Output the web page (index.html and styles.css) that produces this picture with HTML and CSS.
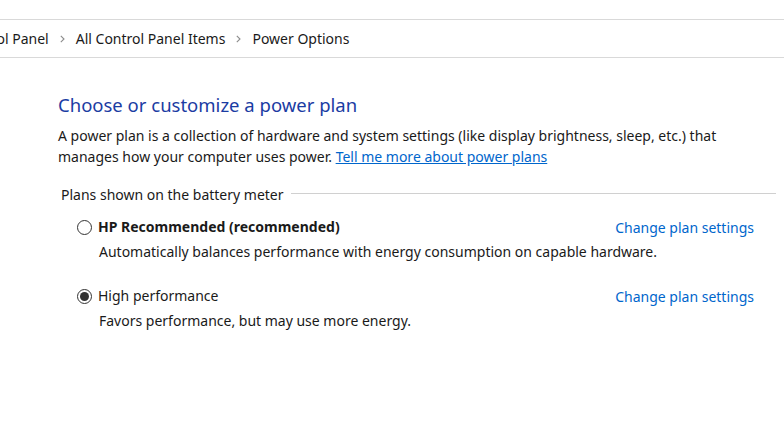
FILE: index.html
```html
<!DOCTYPE html>
<html lang="en">
<head>
    <meta charset="UTF-8">
    <meta name="viewport" content="width=device-width, initial-scale=1.0">
    <title>Power Options</title>
    <link rel="stylesheet" href="styles.css">
</head>
<body>
    <div class="top-strip"></div>

    <!-- Address bar / breadcrumb -->
    <div class="address-bar">
        <span class="crumb crumb-first">Control Panel</span>
        <svg class="chevron" width="5" height="8" viewBox="0 0 5 8"><path d="M0.8 0.8 L4 4 L0.8 7.2" fill="none" stroke="#8c8c8c" stroke-width="1.1"/></svg>
        <span class="crumb">All Control Panel Items</span>
        <svg class="chevron" width="5" height="8" viewBox="0 0 5 8"><path d="M0.8 0.8 L4 4 L0.8 7.2" fill="none" stroke="#8c8c8c" stroke-width="1.1"/></svg>
        <span class="crumb">Power Options</span>
    </div>

    <div class="main">
        <h1 class="title">Choose or customize a power plan</h1>
        <p class="intro">
            A power plan is a collection of hardware and system settings (like display brightness, sleep, etc.) that<br>
            manages how your computer uses power. <a href="#" class="link">Tell me more about power plans</a>
        </p>

        <!-- Plans group -->
        <div class="group-header">
            <span class="group-title">Plans shown on the battery meter</span>
            <span class="group-line"></span>
        </div>

        <div class="plans">
            <div class="plan">
                <span class="radio"></span>
                <span class="plan-name bold">HP Recommended (recommended)</span>
                <a href="#" class="plan-link">Change plan settings</a>
                <span class="plan-desc">Automatically balances performance with energy consumption on capable hardware.</span>
            </div>
            <div class="plan">
                <span class="radio checked"></span>
                <span class="plan-name">High performance</span>
                <a href="#" class="plan-link">Change plan settings</a>
                <span class="plan-desc">Favors performance, but may use more energy.</span>
            </div>
        </div>
    </div>
</body>
</html>
```

FILE: styles.css
```css
/* Global styles */
body {
    font-family: "Noto Sans", "Open Sans", sans-serif;
    font-size: 14px;
    color: #1a1a1a;
    background-color: #fff;
    margin: 0;
    overflow: hidden;
}

.top-strip {
    height: 19px;
}

/* Breadcrumb bar */
.address-bar {
    display: flex;
    align-items: center;
    height: 37px;
    border-top: 1px solid #d9d9d9;
    border-bottom: 1px solid #d9d9d9;
    white-space: nowrap;
}

.crumb {
    color: #1a1a1a;
}

.crumb-first {
    margin-left: -40px;
}

.chevron {
    margin: 0 11px 0 11px;
}

/* Main content */
.main {
    padding: 34px 8px 0 58px;
}

.title {
    font-size: 18.5px;
    font-weight: normal;
    line-height: 26px;
    color: #1b3ca3;
    margin: 0;
}

.intro {
    line-height: 21px;
    margin: 7px 0 0 0;
}

.link {
    color: #0066cc;
}

/* Group header with rule */
.group-header {
    display: flex;
    align-items: center;
    margin-top: 18px;
    line-height: 20px;
    padding-left: 3px;
}

.group-line {
    flex: 1;
    height: 1px;
    background-color: #d0d0d0;
    margin: 0 0 4px 7px;
}

/* Plans */
.plans {
    padding: 0 22px 0 19px;
}

.plan {
    display: grid;
    grid-template-columns: 21px 1fr auto;
    align-items: center;
    margin-top: 23px;
}

.plan:first-child {
    margin-top: 11px;
}

.radio {
    width: 13px;
    height: 13px;
    border: 1px solid #333;
    border-radius: 50%;
    position: relative;
}

.radio.checked::after {
    content: "";
    position: absolute;
    left: 2px;
    top: 2px;
    width: 9px;
    height: 9px;
    border-radius: 50%;
    background-color: #333;
}

.plan-name {
    line-height: 22px;
}

.bold {
    font-weight: bold;
}

.plan-link {
    color: #0066cc;
    text-decoration: none;
}

.plan-desc {
    grid-column: 2 / 4;
    line-height: 20px;
    margin-top: 4px;
    padding-left: 1px;
}
```
